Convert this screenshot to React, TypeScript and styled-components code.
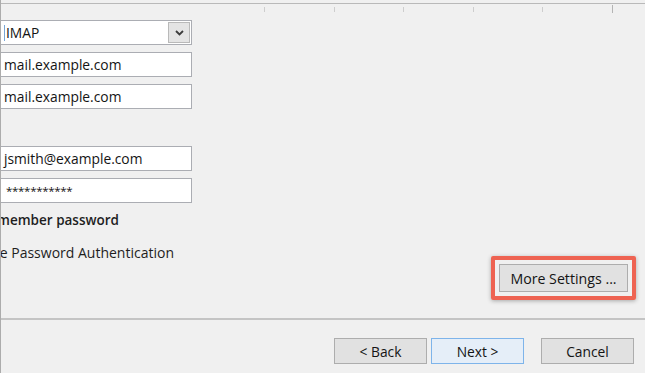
import React from 'react';
import styled, { createGlobalStyle } from 'styled-components';

const GlobalStyle = createGlobalStyle`
  html, body {
    margin: 0;
    padding: 0;
    background: #f0f0f0;
  }
  body {
    font-family: 'Open Sans', 'Noto Sans', sans-serif;
  }
`;

const Window = styled.div`
  width: 645px;
  height: 373px;
  box-sizing: border-box;
  border-left: 1px solid #acacac;
  background: #f0f0f0;
  color: #141414;
  display: flex;
  flex-direction: column;
  overflow: hidden;
`;

const Ruler = styled.div`
  margin-top: 3px;
  height: 16px;
  flex-shrink: 0;
  border-top: 1px solid #b9b9b9;
  padding-left: 263px;
  display: flex;
  gap: 68.6px;
`;

const Tick = styled.span<{ $strong?: boolean }>`
  width: 1px;
  height: ${(p) => (p.$strong ? '8px' : '5px')};
  margin-top: ${(p) => (p.$strong ? '1px' : '3px')};
  background: ${(p) => (p.$strong ? '#b4b4b4' : '#cdcdcd')};
`;

const Body = styled.div`
  flex: 1;
  display: flex;
  justify-content: space-between;
`;

const Fields = styled.div`
  margin-left: -1px;
  width: 192px;
  display: flex;
  flex-direction: column;
`;

const Group = styled.div<{ $offset?: number }>`
  margin-top: ${(p) => p.$offset ?? 0}px;
  display: flex;
  flex-direction: column;
  gap: 7px;
`;

const Box = styled.div`
  height: 25px;
  box-sizing: border-box;
  border: 1px solid #abadb3;
  background: #fff;
  display: flex;
  align-items: center;
  padding-left: 3px;
  font-size: 13.8px;
  color: #141414;
  white-space: nowrap;
`;

const Masked = styled.span`
  padding-left: 2px;
  font-size: 11.5px;
  letter-spacing: -0.3px;
`;

const Caret = styled.span`
  width: 1px;
  height: 16px;
  margin-right: 1px;
  background: #7aa7d6;
`;

const Value = styled.span`
  flex: 1;
`;

const DropButton = styled.span`
  width: 22px;
  height: 21px;
  box-sizing: border-box;
  margin-right: 1px;
  border: 1px solid #b9b9b9;
  background: #e4e4e4;
  display: flex;
  align-items: center;
  justify-content: center;
`;

const CheckRow = styled.label<{ $width: number; $offset: number; $size: number; $weight: number }>`
  width: ${(p) => p.$width}px;
  margin-top: ${(p) => p.$offset}px;
  display: flex;
  align-items: center;
  justify-content: flex-end;
  gap: 6px;
  white-space: nowrap;
  font-size: ${(p) => p.$size}px;
  font-weight: ${(p) => p.$weight};
  line-height: 18px;
  color: #1e1e1e;
`;

const CheckBox = styled.span`
  flex-shrink: 0;
  width: 13px;
  height: 13px;
  box-sizing: border-box;
  border: 1px solid #333;
  background: #fff;
`;

const Side = styled.div`
  align-self: flex-end;
  margin-right: 9px;
  margin-bottom: 18px;
`;

const Highlight = styled.div`
  padding: 4px;
  border: 4px solid #ee6352;
  border-radius: 2px;
  box-shadow: 0 1px 4px rgba(0, 0, 0, 0.3);
`;

const Button = styled.button<{ $width: number; $height: number; $size?: number; $default?: boolean }>`
  width: ${(p) => p.$width}px;
  height: ${(p) => p.$height}px;
  box-sizing: border-box;
  padding: 0;
  border: 1px solid ${(p) => (p.$default ? '#7eb4ea' : '#adadad')};
  background: ${(p) => (p.$default ? '#e5eef8' : '#e1e1e1')};
  font-family: 'Open Sans', 'Noto Sans', sans-serif;
  font-size: ${(p) => p.$size ?? 13.8}px;
  color: #141414;
  display: flex;
  align-items: center;
  justify-content: center;
`;

const Footer = styled.div`
  height: 55px;
  flex-shrink: 0;
  box-sizing: border-box;
  border-top: 2px solid #c4c4c4;
  padding: 18px 11px 0 0;
  display: flex;
  justify-content: flex-end;
  align-items: flex-start;
  gap: 4px;
`;

const Spacer = styled.span`
  width: 9px;
`;

const Chevron: React.FC = () => (
  <svg width="9" height="6" viewBox="0 0 9 6">
    <polyline points="1,1 4.5,4.5 8,1" fill="none" stroke="#3c3c3c" strokeWidth="1.8" />
  </svg>
);

const App: React.FC = () => (
  <>
    <GlobalStyle />
    <Window>
      <Ruler>
        <Tick />
        <Tick />
        <Tick />
        <Tick />
        <Tick />
        <Tick $strong />
      </Ruler>
      <Body>
        <Fields>
          <Group>
            <Box>
              <Caret />
              <Value>IMAP</Value>
              <DropButton>
                <Chevron />
              </DropButton>
            </Box>
            <Box>mail.example.com</Box>
            <Box>mail.example.com</Box>
          </Group>
          <Group $offset={37}>
            <Box>jsmith@example.com</Box>
            <Box>
              <Masked>***********</Masked>
            </Box>
          </Group>
          <CheckRow $width={119} $offset={8} $size={13.5} $weight={600}>
            <CheckBox />
            Remember password
          </CheckRow>
          <CheckRow $width={174} $offset={15} $size={14} $weight={400}>
            <CheckBox />
            Require logon using Secure Password Authentication
          </CheckRow>
        </Fields>
        <Side>
          <Highlight>
            <Button $width={129} $height={28} $size={14.2}>More Settings ...</Button>
          </Highlight>
        </Side>
      </Body>
      <Footer>
        <Button $width={93} $height={26}>&lt; Back</Button>
        <Button $width={93} $height={26} $default>Next &gt;</Button>
        <Spacer />
        <Button $width={93} $height={26}>Cancel</Button>
      </Footer>
    </Window>
  </>
);

export default App;
